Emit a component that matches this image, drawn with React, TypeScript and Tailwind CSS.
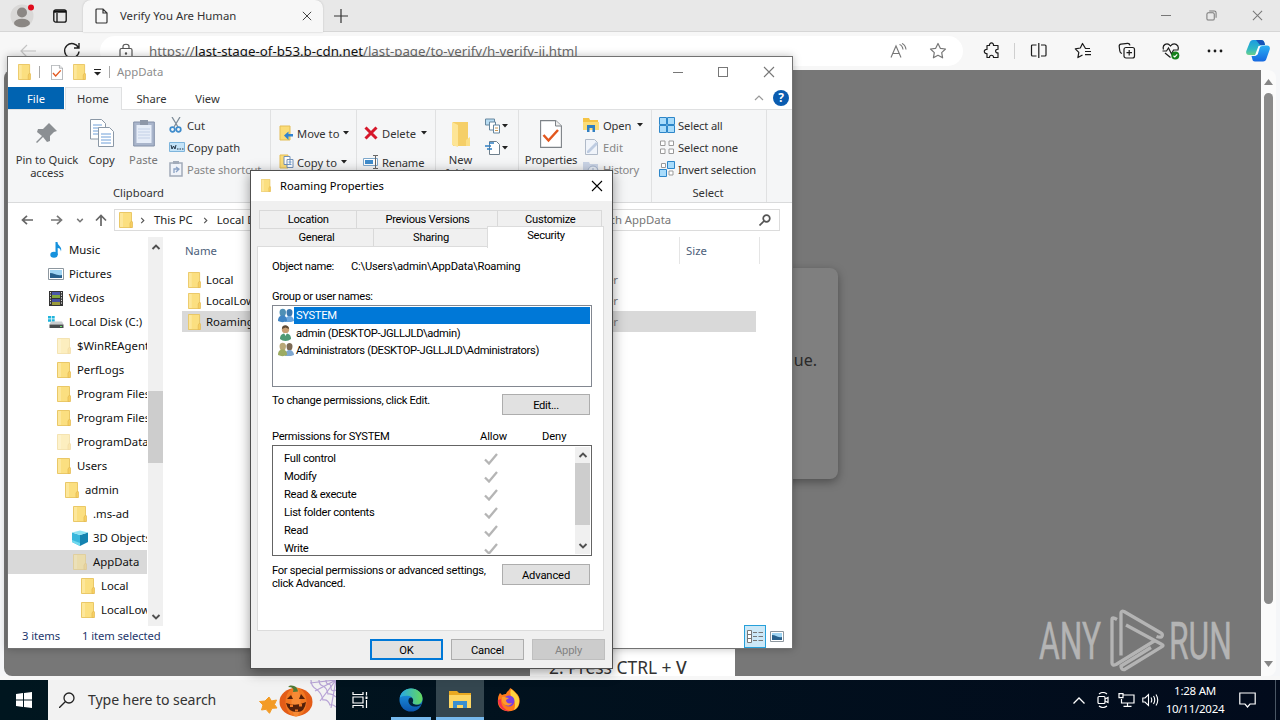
import React from "react";

type Kids = { children?: React.ReactNode };

/* ---------- icons ---------- */

function Folder({ className = "", pale = false }: { className?: string; pale?: boolean }) {
  return (
    <svg viewBox="0 0 14 16" preserveAspectRatio="none" className={`h-4 w-[14px] shrink-0 ${pale ? "opacity-50" : ""} ${className}`}>
      <path d="M.5.5h12V15.500H.5z" fill="#fbdf80" stroke="#e8c35c" strokeWidth=".9" />
      <path d="M11 15.500V11l1.500-2 1 1v5.500z" fill="#f7cf62" stroke="#e3b950" strokeWidth=".7" />
      <path d="M1 1h3v14H1z" fill="#fde79b" />
    </svg>
  );
}

function BigFolder() {
  return (
    <svg viewBox="0 0 20 28" className="h-7 w-5">
      <path d="M2 2h15v24H2z" fill="#f5cf68" />
      <path d="M1 2l6 3v22l-6-2z" fill="#fde596" />
      <path d="M15 20l4-3v9h-4z" fill="#fbdf87" />
    </svg>
  );
}

function Caret() {
  return (
    <svg viewBox="0 0 6 4" className="h-[4px] w-[6px] shrink-0">
      <path d="M0 0h6L3 3.500z" fill="#222" />
    </svg>
  );
}

function Chev({ up = false, className = "" }: { up?: boolean; className?: string }) {
  return (
    <svg viewBox="0 0 10 6" className={`h-[6px] w-[10px] ${className}`} fill="none" stroke="currentColor" strokeWidth="1.900">
      {up ? <path d="M1.500 5L5 1.500 8.500 5" /> : <path d="M1.500 1L5 4.500 8.500 1" />}
    </svg>
  );
}

function Close({ className = "" }: { className?: string }) {
  return (
    <svg viewBox="0 0 12 12" className={`h-3 w-3 ${className}`} fill="none" stroke="currentColor" strokeWidth="1.100">
      <path d="M1 1l10 10M11 1L1 11" />
    </svg>
  );
}

function Picture() {
  return (
    <svg viewBox="0 0 16 12" className="h-3 w-4 shrink-0">
      <path d="M.5.5h15v11H.5z" fill="#fff" stroke="#8d979f" />
      <path d="M2 2h12v8H2z" fill="#9fd4f3" />
      <path d="M2 5c4 0 6 3 12 2v3H2z" fill="#28608c" />
    </svg>
  );
}

function Music() {
  return (
    <svg viewBox="0 0 14 16" className="h-4 w-[14px]">
      <ellipse cx="5" cy="12.700" rx="3.700" ry="3" fill="#1591dd" />
      <path d="M6.500 0h2c0 4 5 4 3.500 9.500-.4-2.500-1.500-3.500-3.300-3.500v7H6.500z" fill="#1591dd" />
    </svg>
  );
}

function Film() {
  return (
    <svg viewBox="0 0 14 15" className="h-[15px] w-[14px]">
      <path d="M0 0h14v15H0z" fill="#333" />
      <path d="M3 1h8v6H3z" fill="#4a57a8" />
      <path d="M3 4h8v3H3z" fill="#83a73d" />
      <path d="M3 8h8v6H3z" fill="#4550a0" />
      <path d="M3 11h8v3H3z" fill="#9a9a3a" />
      <path d="M1.500 1v13M12.500 1v13" stroke="#ddd" strokeDasharray="1.300 1.300" />
    </svg>
  );
}

function Disk() {
  return (
    <svg viewBox="0 0 16 14" className="h-[14px] w-4">
      <path d="M0 1h3v2.500H0zM3.700 1h3v2.500h-3zM0 4.200h3v2.500H0zM3.700 4.200h3v2.500h-3z" fill="#1fb4dc" />
      <path d="M3 6.500h11l1.500 3H1.500z" fill="#c9cdd0" />
      <path d="M1.500 9.500h14V13h-14z" fill="#4a4d4f" />
      <path d="M12 11h2v1h-2z" fill="#6ee36e" />
    </svg>
  );
}

function Cube() {
  return (
    <svg viewBox="0 0 16 16" className="h-4 w-4">
      <path d="M0 2.500L8 5v11L0 12z" fill="#39b7dc" />
      <path d="M8 5l8-2.500V12l-8 4z" fill="#1583b0" />
      <path d="M0 2.500L8 .5l8 2L8 5z" fill="#8fe3f3" />
      <path d="M0 10l8 3v3l-8-4z" fill="#6fd9ee" />
    </svg>
  );
}

function CheckDoc({ className = "" }: { className?: string }) {
  return (
    <svg viewBox="0 0 22 28" className={className}>
      <path d="M.6.600h15L21.400 6v21.400H.6z" fill="#fff" stroke="#7d8287" strokeWidth="1.100" />
      <path d="M15.500.6V6h6" fill="#eee" stroke="#7d8287" />
      <path d="M3.500 15l5 5.500L18 10" fill="none" stroke="#e2571e" strokeWidth="2.500" />
    </svg>
  );
}

function People({ a, b, ab, bb }: { a: string; b?: string; ab: string; bb?: string }) {
  return (
    <svg viewBox="0 0 16 16" className="h-4 w-4 shrink-0">
      {b ? (
        <>
          <path d="M8.500 4c0-4 6-4 6 0 0 3-1 4.500-3 4.500S8.500 7 8.500 4z" fill={b} />
          <path d="M7 14c0-4 2-6 4.500-6s4.500 2 4.500 5l-3 1z" fill={bb} />
          <path d="M1.500 4c0-4.500 6.500-4.500 6.500 0 0 3-1.500 5-3.200 5S1.500 7 1.500 4z" fill={a} />
          <path d="M0 13c0-4 2-5.500 4.500-5.500S9 9 9 13c-3 1.500-6 1.500-9 0z" fill={ab} />
        </>
      ) : (
        <>
          <circle cx="7.500" cy="4.500" r="3.700" fill={a} />
          <path d="M4 4C3.500-1 11-1 11 4L7.500 2.500z" fill="#5d4a35" />
          <path d="M2 14c0-4 2-5.500 5.500-5.500S13 10 13 14c-3 2.500-8 2.500-11 0z" fill={ab} />
          <path d="M6 8l1.500 3L9 8z" fill="#fff" />
        </>
      )}
    </svg>
  );
}

/* ---------- browser ---------- */

function ToolbarIcons() {
  return (
    <div className="flex h-full items-center text-[#1b1b1b]">
      <svg viewBox="0 0 18 18" className="ml-[20px] h-[18px] w-[18px]" fill="none" stroke="currentColor" strokeWidth="1.200" strokeLinejoin="round">
        <path d="M4 3.500h2.500c-.5-3.500 4.500-3.500 4 0H15v3.800c-3.200-.5-3.200 4 0 3.600V15.500h-4.500c.5-3-4.500-3-4 0H4v-4c-3.600.5-3.600-4.500 0-4z" />
      </svg>
      <div className="ml-[13px] h-4 w-px bg-[#cfcfcf]" />
      <svg viewBox="0 0 18 18" className="ml-[15px] h-[18px] w-[18px]" fill="none" stroke="currentColor" strokeWidth="1.200">
        <path d="M6.500 3H2.500Q1.500 3 1.500 4v9q0 1 1 1h4M11 3h4q1 0 1 1v9q0 1-1 1h-4M8.800 1v15" />
      </svg>
      <svg viewBox="0 0 18 18" className="ml-[26px] h-[18px] w-[18px]" fill="none" stroke="currentColor" strokeWidth="1.200" strokeLinejoin="round">
        <path d="M16 6.500h-4.500L8.500 1.500 6.300 6 1.300 6.800l3.500 3.600-.9 5.200L8.500 13M11 9.500h6M11 12.700h6" />
      </svg>
      <svg viewBox="0 0 18 18" className="ml-[26px] h-[18px] w-[18px]" fill="none" stroke="currentColor" strokeWidth="1.200">
        <rect x="6" y="5.500" width="10.500" height="10.500" rx="2" />
        <path d="M11.200 8v5.500M8.500 10.700H14M4 11.500Q2 11 1.800 9L1.200 4.500Q1 2.500 3 2.200l6.500-.8q2-.2 2.500 2" />
      </svg>
      <svg viewBox="0 0 18 18" className="ml-[26px] h-[18px] w-[18px]" fill="none" stroke="currentColor" strokeWidth="1.200">
        <path d="M1.500 7.500C0 3 5-.5 8.500 4 12-.5 17.500 3 16 7.500M.5 9h4L6.500 6l3 6 2-4h5M3 11l5.500 4.500" />
        <circle cx="13.300" cy="13.600" r="4" fill="#15801b" stroke="none" />
        <path d="M11.500 13.800l1.300 1.200 2.400-2.600" stroke="#fff" />
      </svg>
      <svg viewBox="0 0 16 4" className="ml-[27px] h-1 w-4" fill="currentColor">
        <circle cx="2" cy="2" r="1.400" />
        <circle cx="8" cy="2" r="1.400" />
        <circle cx="14" cy="2" r="1.400" />
      </svg>
      <svg viewBox="0 0 24 24" className="ml-[23px] h-6 w-6">
        <defs>
          <linearGradient id="cpA" x1="0" y1="0" x2="0" y2="1">
            <stop offset="0" stopColor="#1b9be0" />
            <stop offset=".6" stopColor="#2fb8c4" />
            <stop offset="1" stopColor="#6bd08a" />
          </linearGradient>
          <linearGradient id="cpB" x1="0" y1="0" x2="0" y2="1">
            <stop offset="0" stopColor="#2bb1f4" />
            <stop offset="1" stopColor="#1668e0" />
          </linearGradient>
        </defs>
        <path d="M7 1h8c2 0 3 1 3.500 3L19 6h-3c-2 0-3 1-3.500 3L11 14c-.5 1.500-1.500 2-3 2H3c-2.500 0-3.300-2-2.700-4L3.500 4C4 2 5.500 1 7 1z" fill="url(#cpA)" />
        <path d="M10 1h5c2 0 3 1 3.500 3L19 6h-5z" fill="#1553b8" />
        <path d="M17 22.500H9c-2 0-2.500-1-2.800-3L5.500 17H8c2 0 3-1 3.500-2.500L13 9c.5-2 1.500-2.500 3-2.500h5c2.500 0 3.300 2 2.700 4L20.500 19.500c-.5 2-1.500 3-3.500 3z" fill="url(#cpB)" />
        <path d="M12.500 7h4c-2 0-2.500.8-3 2.500L12 14.500c-.5 1.500-1.500 2-4 2 1.500-.5 1.500-1.500 2-3z" fill="#fff" />
      </svg>
    </div>
  );
}

function Browser() {
  return (
    <div className="flex h-[680px] flex-col bg-[#f7f7f7]">
      <div className="flex h-8 items-center border-b border-[#d6d6d6] bg-[#e8e8e8]">
        <svg viewBox="0 0 26 26" className="ml-[9px] h-[26px] w-[26px]">
          <circle cx="13" cy="13" r="11.500" fill="#d9d8d7" />
          <circle cx="13" cy="9.500" r="5" fill="#8b8784" />
          <ellipse cx="13" cy="20" rx="8" ry="4.300" fill="#8b8784" />
          <circle cx="22" cy="4.500" r="3" fill="#e00b1c" />
        </svg>
        <svg viewBox="0 0 14 14" className="ml-[18px] h-[14px] w-[14px]" fill="none" stroke="#111" strokeWidth="1.300">
          <rect x=".8" y=".8" width="12.400" height="12.400" rx="2" />
          <path d="M.8 2.500h12.400" strokeWidth="2.400" />
          <path d="M4 4v9" strokeWidth="1.300" />
        </svg>
        <div className="ml-[16px] flex h-8 w-[240px] items-center rounded-t-lg bg-[#f7f7f7] shadow-[0_0_2px_#bbb]">
          <svg viewBox="0 0 13 16" className="ml-[12px] h-4 w-[13px]" fill="none" stroke="#333" strokeWidth="1.200">
            <path d="M2 1h6l4 4v9q0 1-1 1H2q-1 0-1-1V2q0-1 1-1zM8 1v4h4" />
          </svg>
          <span className="ml-[12px] w-[176px] pt-px text-[11.350px] text-[#333]">Verify You Are Human</span>
          <Close className="ml-[6px] h-[10px] w-[10px] text-[#333]" />
        </div>
        <svg viewBox="0 0 14 14" className="ml-[11px] h-[14px] w-[14px]" stroke="#333" strokeWidth="1.200">
          <path d="M7 0v14M0 7h14" />
        </svg>
        <div className="ml-auto mr-[17px] flex items-center gap-[35px] text-[#777]">
          <div className="h-px w-[10px] bg-[#777]" />
          <svg viewBox="0 0 12 12" className="h-[11px] w-[11px]" fill="none" stroke="currentColor" strokeWidth="1.100">
            <rect x="1" y="3" width="8" height="8" rx="1.500" />
            <path d="M3.500 1H9q2 0 2 2v5.500" />
          </svg>
          <Close className="h-[11px] w-[11px]" />
        </div>
      </div>
      <div className="flex h-[38px] items-center">
        <svg viewBox="0 0 16 14" className="ml-[20px] h-[14px] w-4" fill="none" stroke="#c4c4c4" strokeWidth="1.200">
          <path d="M16 7H1M7 1L1 7l6 6" />
        </svg>
        <svg viewBox="0 0 18 18" className="ml-[27px] h-[18px] w-[18px]" fill="none" stroke="#222" strokeWidth="1.400">
          <path d="M15.500 6A7.200 7.200 0 1 0 16 9.500M16 1v5h-5" />
        </svg>
        <div className="ml-[19px] flex h-[30px] w-[863px] items-center rounded-full bg-white">
          <svg viewBox="0 0 14 16" className="ml-[19px] h-4 w-[14px]" fill="none" stroke="#555" strokeWidth="1.200">
            <rect x="1" y="5.500" width="12" height="10" rx="1.500" />
            <path d="M4 5.500V3.500c0-3 6-3 6 0v2" />
            <circle cx="7" cy="10.500" r=".6" />
          </svg>
          <span className="ml-[16px] pt-px text-[13.300px] text-[#6b6b6b]">
            https://<span className="text-[#111]">last-stage-of-b53.b-cdn.net</span>/last-page/to-verify/h-verify-ii.html
          </span>
          <svg viewBox="0 0 17 16" className="ml-auto h-4 w-[17px]" fill="none" stroke="#777" strokeWidth="1.100">
            <path d="M1 14.500L6 3l5 11.500M3 10.500h6M9.500 1.500q3 1 3.500 5M12 .5q3.500 1.500 4 6" />
          </svg>
          <svg viewBox="0 0 18 18" className="ml-[22px] mr-[16px] h-[18px] w-[18px]" fill="none" stroke="#777" strokeWidth="1.200" strokeLinejoin="round">
            <path d="M9 1.500l2.300 4.800 5.200.7-3.800 3.600.9 5.200L9 13.300l-4.600 2.500.9-5.200L1.500 7l5.200-.7z" />
          </svg>
        </div>
        <ToolbarIcons />
      </div>
      <div className="flex h-[606px] bg-[#f5f6f8] pl-1 pr-1">
        <div className="relative w-[1257px] overflow-hidden rounded-l-lg bg-[#777777]">
          <div className="absolute left-[423px] top-[198px] flex h-[211px] w-[411px] items-start justify-end rounded-lg bg-[#7f7f7f] pr-[21px] pt-[80px] text-[16px] text-[#2a2a2a] shadow-[0_3px_10px_rgba(0,0,0,0.35)]">
            nue.
          </div>
          <div className="absolute left-[526px] top-[540px] h-[66px] w-[205px] bg-white pl-[19px] pt-[45px] text-[17.400px] leading-[25px] text-[#333]">
            2. Press CTRL + <span className="font-medium">V</span>
          </div>
          <svg viewBox="0 0 200 70" className="absolute left-[1031px] top-[536px] h-[70px] w-[200px]">
            <g fill="#b4b4b4" stroke="#b4b4b4" strokeWidth=".5" fontFamily="Roboto, sans-serif" fontSize="51">
              <text x="4" y="53" textLength="62" lengthAdjust="spacingAndGlyphs">ANY</text>
              <text x="134" y="53" textLength="63" lengthAdjust="spacingAndGlyphs">RUN</text>
            </g>
            <g fill="none" stroke="#b4b4b4" strokeWidth="3.300" strokeLinejoin="round">
              <path d="M86 49.500V7q0-2.500 3-1.500l37 21.500q2.500 1.500.5 4-2 .5-5-.5" />
              <path d="M82 13.500q-5-3-5 0V57q0 3 4 1.500l39-24" />
              <path d="M91 19l36 19.500q2 1 0 2.200L89.500 63.500q-3.500.5-3.500-3.500l30-18.500" />
            </g>
          </svg>
        </div>
        <div className="flex w-[15px] flex-col items-center justify-between rounded-r-lg bg-[#fbfbfb] py-[9px]">
          <svg viewBox="0 0 9 6" className="h-[6px] w-[9px]"><path d="M4.500 0L9 6H0z" fill="#858585" /></svg>
          <div className="mb-[57px] mt-[8px] w-[9px] grow rounded-full bg-[#8a8a8a]" />
          <svg viewBox="0 0 9 6" className="h-[6px] w-[9px]"><path d="M0 0h9L4.500 6z" fill="#858585" /></svg>
        </div>
      </div>
    </div>
  );
}

/* ---------- explorer ---------- */

function RibbonRow({ icon, children, dim = false, caret = false, className = "" }: Kids & { icon: React.ReactNode; dim?: boolean; caret?: boolean; className?: string }) {
  return (
    <div className={`flex h-[22px] items-center whitespace-nowrap ${dim ? "text-[#858585]" : "text-[#333]"} ${className}`}>
      <span className={`flex w-[18px] shrink-0 items-center ${dim ? "opacity-70" : ""}`}>{icon}</span>
      {children && <span>{children}</span>}
      {caret && <span className="ml-[4px] flex"><Caret /></span>}
    </div>
  );
}

function SmallMenu({ children }: Kids) {
  return (
    <div className="flex h-[22px] items-center gap-px">
      <span className="flex w-4">{children}</span>
      <Caret />
    </div>
  );
}

const I = "h-4 w-4 shrink-0";

function Ribbon() {
  return (
    <div className="flex h-[93px] border-b border-[#d9dadb] bg-[#f5f6f7] text-[11.200px] leading-[13px] text-[#333]">
      <div className="relative flex w-[263px] border-r border-[#e0e1e2] pt-[4px]">
        <div className="flex w-[78px] flex-col items-center pt-[8px] text-center">
          <svg viewBox="0 0 24 24" className="h-6 w-6">
            <path d="M14 1l8 8-3 1-4 4v5l-3 1-4-5-6 6-1-1 6-6-5-4 1-3h5l4-4z" fill="#8b8f93" />
          </svg>
          <span className="mt-[7px] w-[70px] tracking-[-0.050px]">Pin to Quick access</span>
        </div>
        <div className="flex w-[31px] flex-col items-center pt-[5px]">
          <svg viewBox="0 0 24 28" className="h-7 w-6" fill="#fff" stroke="#8b98a6">
            <path d="M.5.5h11l4 4V20H.5z" />
            <path d="M3 6h9M3 9h9M3 12h9M3 15h6" stroke="#6e9fd8" />
            <path d="M8.500 8.500h11l4 4v15h-15z" />
            <path d="M11 15h10M11 18h10M11 21h10M11 24h10" stroke="#6e9fd8" />
          </svg>
          <span className="mt-[6px]">Copy</span>
        </div>
        <div className="flex w-[53px] flex-col items-center pt-[5px] text-[#777]">
          <svg viewBox="0 0 22 28" className="h-7 w-[22px]">
            <path d="M.7 3h20.600v24H.7z" fill="#a9b5cb" stroke="#8390a8" />
            <path d="M3.500 6h15v18h-15z" fill="#e6edf8" />
            <path d="M7 1h8v5H7z" fill="#8d97a8" />
            <path d="M5 10h12M5 13h12M5 16h12M5 19h12" stroke="#c3d0e6" />
          </svg>
          <span className="mt-[6px]">Paste</span>
        </div>
        <div className="-ml-px">
          <RibbonRow icon={
            <svg viewBox="0 0 16 16" className={I} fill="none" stroke="#3f8ccc" strokeWidth="1.700">
              <path d="M3 0l6 10M11 0L5 10" stroke="#7f8d99" strokeWidth="1.300" />
              <circle cx="3.500" cy="12.500" r="2.300" /><circle cx="9.500" cy="12.500" r="2.300" />
            </svg>}>Cut</RibbonRow>
          <RibbonRow icon={
            <svg viewBox="0 0 16 10" className="h-[10px] w-4">
              <path d="M.5.500h15v9H.5z" fill="#c4e3f8" stroke="#7eb5dc" />
              <path d="M2 3l1 4 1.500-3L6 7l1-4" fill="none" stroke="#234" /><path d="M8 7h1.500M10.500 7H12M13 7h1.500" stroke="#234" />
            </svg>}>Copy path</RibbonRow>
          <RibbonRow dim className="tracking-[-0.100px]" icon={
            <svg viewBox="0 0 14 16" className="h-4 w-[14px]">
              <path d="M1 2h12v13H1z" fill="#eef3fa" stroke="#7f8ca0" strokeWidth="1.500" /><path d="M4 0h6v3H4z" fill="#7f8ca0" />
              <path d="M5 12V8h4M7 6l3 2-3 3" fill="none" stroke="#5d7eb0" strokeWidth="1.300" />
            </svg>}>Paste shortcut</RibbonRow>
        </div>
        <span className="absolute left-0 top-[76px] w-[261px] text-center">Clipboard</span>
      </div>
      <div className="flex w-[86px] flex-col gap-[7px] border-r border-[#e0e1e2] pl-[8px] pt-[12px]">
        <RibbonRow caret icon={
          <svg viewBox="0 0 16 16" className={I}><path d="M1 1h10v14H1z" fill="#fbdc77" stroke="#e3bd57" /><path d="M14 11.500h-4.500V15L5 10.500 9.500 6.500V9H14z" fill="#3183d1" /></svg>}>Move to</RibbonRow>
        <RibbonRow caret icon={
          <svg viewBox="0 0 16 16" className={I}><path d="M1 1h8v13H1z" fill="#fbdc77" stroke="#e3bd57" /><path d="M5 2.500h6v8H5zM8 5.500h6v8H8z" fill="#fff" stroke="#7391b8" /><path d="M9.500 8h3M9.500 10.500h3" stroke="#6e9fd8" /></svg>}>Copy to</RibbonRow>
      </div>
      <div className="flex w-[79px] flex-col gap-[7px] border-r border-[#e0e1e2] pl-[6px] pt-[12px]">
        <RibbonRow caret className="gap-px" icon={
          <svg viewBox="0 0 14 14" className="ml-px h-[14px] w-[14px]" stroke="#d6182b" strokeWidth="3"><path d="M1.500 1.500l11 11M12.500 1.500l-11 11" /></svg>}>Delete</RibbonRow>
        <RibbonRow className="gap-px tracking-[-0.150px]" icon={
          <svg viewBox="0 0 17 14" className="h-[14px] w-[17px]"><path d="M.5 3.500h14v7H.5z" fill="#fff" stroke="#7ea9cd" /><path d="M2 5h8v4H2z" fill="#3f8ccc" /><path d="M10 .5h2.500v13H10M15 .5h-2.500v13H15" fill="none" stroke="#666" /></svg>}>Rename</RibbonRow>
      </div>
      <div className="flex w-[83px] border-r border-[#e0e1e2]">
        <div className="flex w-[49px] flex-col items-center pt-[10px] text-center">
          <BigFolder />
          <span className="mt-[5px] w-10">New folder</span>
        </div>
        <div className="pt-[5px]">
          <SmallMenu>
            <svg viewBox="0 0 16 16" className={I} fill="#fff" stroke="#67879f"><path d="M.5 1h9v6h-9z" fill="#b8dcf2" /><path d="M4.500 4h6v8h-6z" /><path d="M8.500 7h6v8h-6z" /><path d="M10 10h3M10 12.500h3" stroke="#c95" /></svg>
          </SmallMenu>
          <SmallMenu>
            <svg viewBox="0 0 16 16" className={I} fill="#fff" stroke="#6e7f8c"><path d="M4.500 1.500h7l3 3v10h-10z" /><path d="M0 6h6M2 9h5M4 3h5" stroke="#2f7fc2" strokeWidth="1.300" /></svg>
          </SmallMenu>
        </div>
      </div>
      <div className="flex w-[133px] border-r border-[#e0e1e2]">
        <div className="flex w-[64px] flex-col items-center pt-[10px]">
          <CheckDoc className="h-7 w-[22px]" />
          <span className="mt-[5px] tracking-[-0.200px]">Properties</span>
        </div>
        <div className="pt-[4px]">
          <RibbonRow className="gap-[2px] tracking-[-0.150px]" caret icon={
            <svg viewBox="0 0 16 16" className={I}><path d="M0 1h6l1 2h8v10H0z" fill="#f5c445" /><path d="M0 5h16v8H0z" fill="#fbdc77" /><path d="M4 15V8h8v7H9.500v-4h-3v4z" fill="#2f7fc2" /></svg>}>Open</RibbonRow>
          <RibbonRow dim className="gap-[2px]" icon={
            <svg viewBox="0 0 16 16" className={I}><path d="M2.500.5h9l3 3v12h-12z" fill="#eef4fc" stroke="#93a2b5" /><path d="M4 12L13 3l2 2-9 9H4z" fill="#a8bbd9" /></svg>}>Edit</RibbonRow>
          <RibbonRow dim className="gap-[2px] tracking-[-0.250px]" icon={
            <svg viewBox="0 0 16 16" className={I}><path d="M0 1h6l1 2h8v10H0z" fill="#b9c7df" /><circle cx="10" cy="10" r="5" fill="#e4edf9" stroke="#8296ba" /><path d="M10 7v3h3" fill="none" stroke="#8296ba" /></svg>}>History</RibbonRow>
        </div>
      </div>
      <div className="w-[115px] border-r border-[#e0e1e2] pl-[7px] pt-[4px]">
        <RibbonRow className="gap-px tracking-[-0.150px]" icon={
          <svg viewBox="0 0 16 16" className={I}><path d="M.5.5h7v7h-7zM8.500.5h7v7h-7zM.5 8.500h7v7h-7zM8.500 8.500h7v7h-7z" fill="#a9dcfb" stroke="#2d86c9" /></svg>}>Select all</RibbonRow>
        <RibbonRow className="gap-px tracking-[-0.080px]" icon={
          <svg viewBox="0 0 16 16" className={I}><path d="M1.500 2h4.500v4.500H1.500zM10 2h4.500v4.500H10zM1.500 10h4.500v4.500H1.500zM10 10h4.500v4.500H10z" fill="#fff" stroke="#9a9a9a" /></svg>}>Select none</RibbonRow>
        <RibbonRow className="gap-px tracking-[-0.200px]" icon={
          <svg viewBox="0 0 16 16" className={I}><path d="M8.500.5h7v7h-7zM.5 8.500h7v7h-7z" fill="#a9dcfb" stroke="#2d86c9" /><path d="M2.500 2.500h4v4h-4zM10 10h4v4h-4z" fill="#fff" stroke="#9a9a9a" /></svg>}>Invert selection</RibbonRow>
        <div className="mt-[6px] w-[98px] text-center">Select</div>
      </div>
    </div>
  );
}

const tree: { label: string; pad: string; kind?: string; sel?: boolean }[] = [
  { label: "Music", pad: "pl-[40px]", kind: "music" },
  { label: "Pictures", pad: "pl-[40px]", kind: "pic" },
  { label: "Videos", pad: "pl-[40px]", kind: "film" },
  { label: "Local Disk (C:)", pad: "pl-[40px]", kind: "disk" },
  { label: "$WinREAgent", pad: "pl-[48px]", kind: "pale" },
  { label: "PerfLogs", pad: "pl-[48px]" },
  { label: "Program Files", pad: "pl-[48px]" },
  { label: "Program Files", pad: "pl-[48px]" },
  { label: "ProgramData", pad: "pl-[48px]", kind: "pale" },
  { label: "Users", pad: "pl-[48px]" },
  { label: "admin", pad: "pl-[56px]" },
  { label: ".ms-ad", pad: "pl-[64px]" },
  { label: "3D Objects", pad: "pl-[64px]", kind: "cube" },
  { label: "AppData", pad: "pl-[64px]", kind: "pale", sel: true },
  { label: "Local", pad: "pl-[72px]" },
  { label: "LocalLow", pad: "pl-[72px]" },
];

function TreeIcon({ kind }: { kind?: string }) {
  if (kind === "music") return <Music />;
  if (kind === "pic") return <Picture />;
  if (kind === "film") return <Film />;
  if (kind === "disk") return <Disk />;
  if (kind === "cube") return <Cube />;
  return <Folder pale={kind === "pale"} />;
}

function Explorer() {
  return (
    <div className="absolute left-[7px] top-[56px] flex h-[593px] w-[786px] flex-col border border-[#727272] bg-white text-[11.350px] text-[#111] shadow-[0_0_8px_rgba(0,0,0,0.25)]">
      <div className="flex h-[30px] items-center pl-[10px]">
        <Folder className="!w-[13px]" />
        <div className="ml-[8px] h-3 w-px bg-[#aaa]" />
        <CheckDoc className="ml-[11px] h-[15px] w-[12px]" />
        <Folder className="ml-[10px] !w-[13px]" />
        <svg viewBox="0 0 7 7" className="ml-[8px] h-[7px] w-[7px]"><path d="M0 0h7v1H0zM0 3h7L3.500 6.500z" fill="#222" /></svg>
        <div className="ml-[8px] h-3 w-px bg-[#aaa]" />
        <span className="ml-[7px] text-[#8d8d8d]">AppData</span>
        <div className="ml-auto mr-[17px] flex items-center gap-[35px] text-[#777]">
          <div className="h-px w-[10px] bg-[#777]" />
          <div className="h-[10px] w-[10px] border border-[#777]" />
          <Close />
        </div>
      </div>
      <div className="flex h-[23px] items-stretch border-b border-[#dfe0e1] text-center text-[11.200px] leading-[23px] text-[#333]">
        <div className="w-14 bg-[#0063b1] text-white">File</div>
        <div className="-mb-px ml-px w-[57px] border border-b-0 border-[#dfe0e1] bg-[#f5f6f7] pr-px leading-[22px]">Home</div>
        <div className="ml-px w-[57px]">Share</div>
        <div className="w-[55px]">View</div>
        <div className="ml-auto mr-[3px] flex items-center gap-[9px]">
          <svg viewBox="0 0 10 6" className="h-[6px] w-[10px]" fill="none" stroke="#999" strokeWidth="1.200"><path d="M1 5l4-4 4 4" /></svg>
          <div className="h-4 w-4 rounded-full bg-[#0a5cb0] text-[12px] font-bold leading-4 text-white">?</div>
        </div>
      </div>
      <Ribbon />
      <div className="flex h-[34px] items-center text-[#777]">
        <svg viewBox="0 0 12 10" className="ml-[13px] h-[10px] w-3" fill="none" stroke="#666" strokeWidth="1.700"><path d="M12 5H1.500M6 .8L1.500 5 6 9.200" /></svg>
        <svg viewBox="0 0 12 10" className="ml-[18px] h-[10px] w-3" fill="none" stroke="#777" strokeWidth="1.700"><path d="M0 5h10.500M6 .8L10.500 5 6 9.200" /></svg>
        <Chev className="ml-[13px] !h-[5px] !w-[8px]" />
        <svg viewBox="0 0 12 12" className="ml-[11px] h-3 w-3" fill="none" stroke="#666" strokeWidth="1.700"><path d="M6 12V1.500M1 6.500l5-5 5 5" /></svg>
        <div className="ml-[7px] flex h-[22px] w-[420px] items-center border border-[#dcdcdc] text-[#222]">
          <Folder className="ml-[4px]" />
          <svg viewBox="0 0 5 8" className="ml-[7px] h-[7px] w-[5px]" fill="none" stroke="#555" strokeWidth="1.300"><path d="M1 1l3 3-3 3" /></svg>
          <span className="ml-[9px]">This PC</span>
          <svg viewBox="0 0 5 8" className="ml-[10px] h-[7px] w-[5px]" fill="none" stroke="#555" strokeWidth="1.300"><path d="M1 1l3 3-3 3" /></svg>
          <span className="ml-[9px]">Local Disk (C:)</span>
        </div>
        <div className="ml-[30px] flex h-[22px] w-[216px] items-center border border-[#dcdcdc]">
          <span className="ml-[21px] text-[#777]">Search AppData</span>
          <svg viewBox="0 0 12 12" className="ml-auto mr-[8px] h-3 w-3" fill="none" stroke="#555" strokeWidth="1.700"><circle cx="7.500" cy="4.500" r="3.300" /><path d="M5 7l-4.500 4.500" /></svg>
        </div>
      </div>
      <div className="flex h-[389px] text-[#111]">
        <div className="w-[139px] overflow-hidden pt-px">
          {tree.map((t, i) => (
            <div key={i} className={`flex h-6 items-center whitespace-nowrap ${t.pad} ${t.sel ? "bg-[#d9d9d9]" : ""}`}>
              <span className="mr-[5px] flex w-4 shrink-0 justify-center"><TreeIcon kind={t.kind} /></span>
              {t.label}
            </div>
          ))}
        </div>
        <div className="ml-px flex w-[15px] flex-col items-center bg-[#f0f0f0] text-[#505050]">
          <Chev up className="mt-[7px]" />
          <div className="mt-[141px] h-[72px] w-full bg-[#cdcdcd]" />
          <Chev className="mb-[6px] mt-auto" />
        </div>
        <div className="ml-[19px] w-[604px]">
          <div className="flex h-[27px] items-center text-[#4c607a]">
            <span className="ml-[3px] w-[494px]">Name</span>
            <div className="h-full w-px bg-[#e5e5e5]" />
            <span className="ml-[6px] w-[73px]">Size</span>
            <div className="h-full w-px bg-[#e5e5e5]" />
          </div>
          <div className="mt-[5px]">
            {["Local", "LocalLow", "Roaming"].map((n) => (
              <div key={n} className={`flex h-[21px] w-[574px] items-center ${n === "Roaming" ? "bg-[#d9d9d9]" : ""}`}>
                <Folder className="ml-[6px] !w-[13px]" />
                <span className="ml-[5px] w-[357px]">{n}</span>
                <span className="w-[55px] whitespace-nowrap text-right text-[#777]">File folder</span>
              </div>
            ))}
          </div>
        </div>
      </div>
      <div className="-mt-[2px] flex grow items-center text-[11.250px] text-[#23366b]">
        <span className="ml-[14px] w-[60px] tracking-[-0.080px]">3 items</span>
        <span className="tracking-[-0.080px]">1 item selected</span>
        <div className="ml-auto mr-[4px] flex h-[23px] w-[22px] items-center justify-center border border-[#26a0da] bg-[#cce8f7]">
          <svg viewBox="0 0 16 13" className="h-[13px] w-4" fill="#fff" stroke="#777">
            <path d="M.5.500h4v12h-4zM.5 4.500h4M.5 8.500h4" />
            <path d="M6 2.500h4M11.500 2.500H16M6 6.500h4M11.500 6.500H16M6 10.500h4M11.500 10.500H16" />
          </svg>
        </div>
        <div className="mr-[8px] flex w-[14px]">
          <svg viewBox="0 0 14 11" className="h-[11px] w-[14px]">
            <path d="M.5.5h13v10H.5z" fill="#fff" stroke="#8d979f" />
            <path d="M2 2h10v7H2z" fill="#9fd4f3" />
            <path d="M2 4c4 0 5 3 10 2v3H2z" fill="#28608c" />
          </svg>
        </div>
      </div>
    </div>
  );
}

/* ---------- properties dialog ---------- */

function Btn({ children, className = "" }: Kids & { className?: string }) {
  return <div className={`flex h-[21px] items-center justify-center pt-px ${className}`}>{children}</div>;
}

function Dialog() {
  return (
    <div className="absolute left-[250px] top-[170px] flex h-[499px] w-[363px] flex-col border border-[#505050] bg-[#f0f0f0] font-['Roboto',sans-serif] text-[11.200px] leading-[13px] tracking-[-0.300px] text-black shadow-[0_3px_12px_rgba(0,0,0,0.4)]">
      <div className="flex h-[30px] shrink-0 items-center bg-white pb-px font-['Noto_Sans',sans-serif] text-[11.150px] tracking-normal">
        <Folder className="ml-[10px] !h-[13px] !w-[10px]" />
        <span className="ml-[9px]">Roaming Properties</span>
        <Close className="ml-auto mr-[9px]" />
      </div>
      <div className="ml-[8px] mt-[9px] flex h-[18px] w-[343px] border border-b-0 border-[#d9d9d9] text-center leading-[18px]">
        <div className="w-[98px] border-r border-[#d9d9d9]">Location</div>
        <div className="w-[141px] border-r border-[#d9d9d9] pl-px">Previous Versions</div>
        <div className="w-[104px] pl-[2px]">Customize</div>
      </div>
      <div className="ml-[8px] flex h-[18px] w-[345px] text-center leading-[18px]">
        <div className="w-[115px] border-r border-t border-[#d9d9d9] pl-px">General</div>
        <div className="w-[113px] border-t border-[#d9d9d9] pl-px">Sharing</div>
        <div className="relative z-10 -mt-[2px] h-[22px] w-[117px] border border-b-0 border-[#dcdcdc] bg-white pl-px">Security</div>
      </div>
      <div className="ml-[6px] flex h-[385px] w-[347px] flex-col border border-[#dcdcdc] bg-white pl-[14px]">
        <div className="mt-[13px] flex">
          <span className="w-[79px]">Object name:</span>
          <span className="tracking-[-0.200px]">C:\Users\admin\AppData\Roaming</span>
        </div>
        <div className="mt-[17px]">Group or user names:</div>
        <div className="mt-[2px] h-[82px] w-[320px] border border-[#828790] px-px pt-px tracking-[-0.350px]">
          <div className="flex h-[17px] items-center">
            <span className="ml-[4px] flex"><People a="#4f8fb5" ab="#3f84c4" b="#3a78b0" bb="#69a5dd" /></span>
            <span className="h-full grow bg-[#0078d7] pl-[2px] leading-[18px] text-white">SYSTEM</span>
          </div>
          <div className="flex h-[17px] items-center">
            <span className="ml-[4px] mr-[2px]"><People a="#c99f74" ab="#4f9a76" /></span>
            <span className="pt-px">admin (DESKTOP-JGLLJLD\admin)</span>
          </div>
          <div className="flex h-[17px] items-center">
            <span className="ml-[4px] mr-[2px]"><People a="#b9a878" ab="#9cab62" b="#7c6a55" bb="#7ea6cf" /></span>
            <span className="pt-px">Administrators (DESKTOP-JGLLJLD\Administrators)</span>
          </div>
        </div>
        <div className="mt-[7px] flex h-[21px] w-[318px] justify-between">
          <span>To change permissions, click Edit.</span>
          <Btn className="w-[88px] border border-[#adadad] bg-[#e1e1e1]">Edit...</Btn>
        </div>
        <div className="mt-[15px] flex">
          <span className="w-[208px]">Permissions for SYSTEM</span>
          <span className="w-[62px] tracking-[-0.100px]">Allow</span>
          <span className="tracking-[-0.100px]">Deny</span>
        </div>
        <div className="mt-[2px] flex h-[111px] w-[320px] shrink-0 justify-between border border-[#646464] p-px">
          <div className="h-[107px] overflow-hidden pt-[2px]">
            {["Full control", "Modify", "Read & execute", "List folder contents", "Read", "Write"].map((p) => (
              <div key={p} className="flex h-[18px] items-center">
                <span className="w-[200px] pl-[10px]">{p}</span>
                <svg viewBox="0 0 14 12" className="ml-[10px] mt-[2px] h-3 w-[14px]" fill="none" stroke="#b5b5b5" strokeWidth="2.300"><path d="M1 6.500l4 4L13 1" /></svg>
              </div>
            ))}
          </div>
          <div className="flex w-[15px] flex-col items-center bg-[#f0f0f0] text-[#505050]">
            <Chev up className="mt-[5px]" />
            <div className="mt-[5px] h-[62px] w-full bg-[#cdcdcd]" />
            <Chev className="mb-[5px] mt-auto" />
          </div>
        </div>
        <div className="mt-[8px] flex h-[26px] w-[318px] items-start justify-between">
          <span className="w-[226px] whitespace-nowrap">For special permissions or advanced settings,<br />click Advanced.</span>
          <Btn className="w-[88px] border border-[#adadad] bg-[#e1e1e1] tracking-[-0.150px]">Advanced</Btn>
        </div>
      </div>
      <div className="ml-[119px] mt-[8px] flex gap-[8px] tracking-[-0.150px]">
        <Btn className="w-[73px] border-2 border-[#0078d7] bg-[#e1e1e1]">OK</Btn>
        <Btn className="w-[73px] border border-[#adadad] bg-[#e1e1e1]">Cancel</Btn>
        <Btn className="w-[73px] border border-[#bfbfbf] bg-[#cccccc] text-[#838383]">Apply</Btn>
      </div>
    </div>
  );
}

/* ---------- taskbar ---------- */

function Pumpkin() {
  return (
    <svg viewBox="0 0 88 40" className="h-10 w-[88px]">
      <g fill="none" stroke="#b7a3d6" strokeWidth="1.200">
        <path d="M88 0L62 3M88 0L67 11M88 0L72 21M88 0L83 28" />
        <path d="M78 0q0 4 2.500 4t2.500 4 5 2M71 0q0 5 4 6 4 2 5 8 4-1 8 3M63 0q0 6 5 9 5 3 7 11 5-1 7 5 3-1 6 2" />
      </g>
      <path d="M21 17l2.500 4 5-1-2 4.500 2.500 3.500-5 .3-2.500 5-3.500-4-4.500.7 1.500-5-3.500-3.500 5.500-.5z" fill="#f39b25" stroke="#f39b25" strokeLinejoin="round" />
      <ellipse cx="48" cy="22" rx="16.500" ry="14" fill="#e35c17" />
      <ellipse cx="48" cy="22" rx="10.500" ry="14.500" fill="#f27822" />
      <ellipse cx="48" cy="22" rx="4.500" ry="14.500" fill="#f78a35" />
      <path d="M45 12q2-5-5-5l2-1.500q7-1 8 6z" fill="#4f7a35" />
      <path d="M43 15l2 4-6 0zM53 14l4 5h-6zM38 23q10 4 20-1-1 10-9 10-9 0-11-9z" fill="#54200a" />
      <path d="M42 24.500h3v2.500h-3zM51 24h3v2.500h-3zM47 29.500h3v2h-3z" fill="#f27822" />
    </svg>
  );
}

function Taskbar() {
  return (
    <div className="flex h-10 items-center bg-gradient-to-r from-[#00161f] to-[#020b1c] text-white">
      <div className="flex w-12 items-center justify-center">
        <svg viewBox="0 0 16 16" className="h-4 w-4" fill="#fff"><path d="M0 2l7-1v6.500H0zM8 .9L16 0v7.500H8zM0 8.500h7V15l-7-1zM8 8.500h8V16l-8-1z" /></svg>
      </div>
      <div className="flex h-full w-[288px] items-center bg-[#f2f2f2] text-[#333]">
        <svg viewBox="0 0 16 16" className="ml-[11px] h-4 w-4" fill="none" stroke="#222" strokeWidth="1.300"><circle cx="10" cy="6" r="5" /><path d="M6.500 9.500L0 16" /></svg>
        <span className="ml-[13px] w-[124px] whitespace-nowrap text-[14.100px] tracking-[-0.080px]">Type here to search</span>
        <span className="ml-auto"><Pumpkin /></span>
      </div>
      <div className="flex w-12 justify-center">
        <svg viewBox="0 0 17 16" className="h-4 w-[17px]" fill="none" stroke="#fff" strokeWidth="1.200"><path d="M1 0v2.500h10V0M1 16v-2.500h10V16M1 5h10v6H1zM14.500 0v3.500M14.500 8v8" /><path d="M13.500 4.500h2v2.500h-2z" fill="#fff" stroke="none" /></svg>
      </div>
      <div className="ml-[7px] flex h-full w-[40px] items-center justify-center border-b-[3px] border-[#76b9ed] pt-[2px]">
        <svg viewBox="0 0 24 24" className="h-6 w-6">
          <defs>
            <linearGradient id="edA" x1="0" y1="0" x2="1" y2="0"><stop offset="0" stopColor="#27a8e6" /><stop offset="1" stopColor="#65d95d" /></linearGradient>
            <linearGradient id="edB" x1="0" y1="0" x2="0" y2="1"><stop offset="0" stopColor="#1f9fe8" /><stop offset="1" stopColor="#0b55ad" /></linearGradient>
          </defs>
          <circle cx="12" cy="12" r="11.500" fill="url(#edB)" />
          <path d="M.8 9.500C2 4 6.500.5 12 .5c6.500 0 11.500 4.500 11.500 10 0 4-3 6.300-6.500 6.300-3 0-4-1.300-3.500-2.300 1.500-2 .5-6.500-4.500-6.800C5 7.400 2 8.500.8 9.500z" fill="url(#edA)" />
          <path d="M13.500 14.500c1.200-1.500.8-4-1-5-2.500 0-3.500 2-3 4.500.5 2.500 3 4.500 6 4.500 3 0 5.500-.5 7.500-2.500-2 1-8.500 1.800-9.500-1.500z" fill="#03223a" />
        </svg>
      </div>
      <div className="ml-[5px] flex h-full w-[48px] items-center justify-center border-b-[3px] border-[#76b9ed] bg-[#34464f] pt-[2px]">
        <svg viewBox="0 0 22 19" className="h-[19px] w-[22px]"><path d="M0 1h8l2 2h12v15H0z" fill="#e9a921" /><path d="M0 5h22v13H0z" fill="#fdd663" /><path d="M4 18v-7h14v7h-4v-3H8v3z" fill="#3a8fd0" /></svg>
      </div>
      <div className="flex w-[49px] justify-center">
        <svg viewBox="0 0 24 24" className="h-6 w-6">
          <path d="M3 5l2 2c2-1 3-1 4-1 1-3 4-4 4-6 4 2 5 4 6 5 4 3 5 9 2 14-3 4-8 5-12 4C3 22 0 17 1 11c0-3 1-4 2-6z" fill="#ff7a1a" />
          <path d="M14 1c5 4 9 8 8 13 0 4-3 7-5 8 2-5 1-9-2-12-2-3-2-6-1-9z" fill="#ffd23d" />
          <path d="M1 12c0 7 6 12 12 11-6-1-9-5-9-12z" fill="#f5304e" />
          <circle cx="12" cy="13" r="5.500" fill="#7b3fe0" />
          <path d="M5 9c3-1 4 1 7 1l-3 2c0 3 3 4 6 3-2 4-9 3-10-2z" fill="#ff9a2b" />
        </svg>
      </div>
      <div className="ml-auto flex h-full items-center text-center text-[11.500px] leading-[18px] tracking-[-0.250px]">
        <svg viewBox="0 0 12 7" className="h-[7px] w-3" fill="none" stroke="#fff" strokeWidth="1.300"><path d="M.5 6.500L6 1l5.500 5.500" /></svg>
        <svg viewBox="0 0 12 16" className="ml-[12px] h-4 w-3" fill="none" stroke="#fff" strokeWidth="1.200"><rect x="1" y="4.500" width="7" height="7" rx="1" /><path d="M8 7l3-1.500v5L8 9M2 2Q6-1 10 2M2 14q4 3 8 0" /></svg>
        <svg viewBox="0 0 17 14" className="ml-[9px] h-[14px] w-[17px]" fill="none" stroke="#fff" strokeWidth="1.200"><path d="M5 2h11v8H3.500V6M1 .6h4v4H1zM9.500 10v3M5.500 13.300h8" /></svg>
        <svg viewBox="0 0 17 14" className="ml-[7px] h-[14px] w-[17px]" fill="none" stroke="#fff" strokeWidth="1.100"><path d="M.8 5H3l3.500-3.500v11L3 9H.8zM9 4.500q1.500 2.500 0 5M11.500 3q2.500 4 0 8M14 1.500q3.500 5.500 0 11" /></svg>
        <div className="ml-[6px] w-[60px] whitespace-nowrap">1:28 AM<br />10/11/2024</div>
        <svg viewBox="0 0 17 16" className="ml-[14px] h-4 w-[17px]" fill="none" stroke="#fff" strokeWidth="1.200"><path d="M.8 1h15.400v11H11l-2.500 3L6 12H.8z" /></svg>
        <div className="ml-[19px] mr-1 h-full w-px bg-[#4a5664]" />
      </div>
    </div>
  );
}

export default function App() {
  return (
    <div className="relative h-[720px] w-[1280px] overflow-hidden font-['Noto_Sans',sans-serif]">
      <Browser />
      <Taskbar />
      <Explorer />
      <Dialog />
    </div>
  );
}
